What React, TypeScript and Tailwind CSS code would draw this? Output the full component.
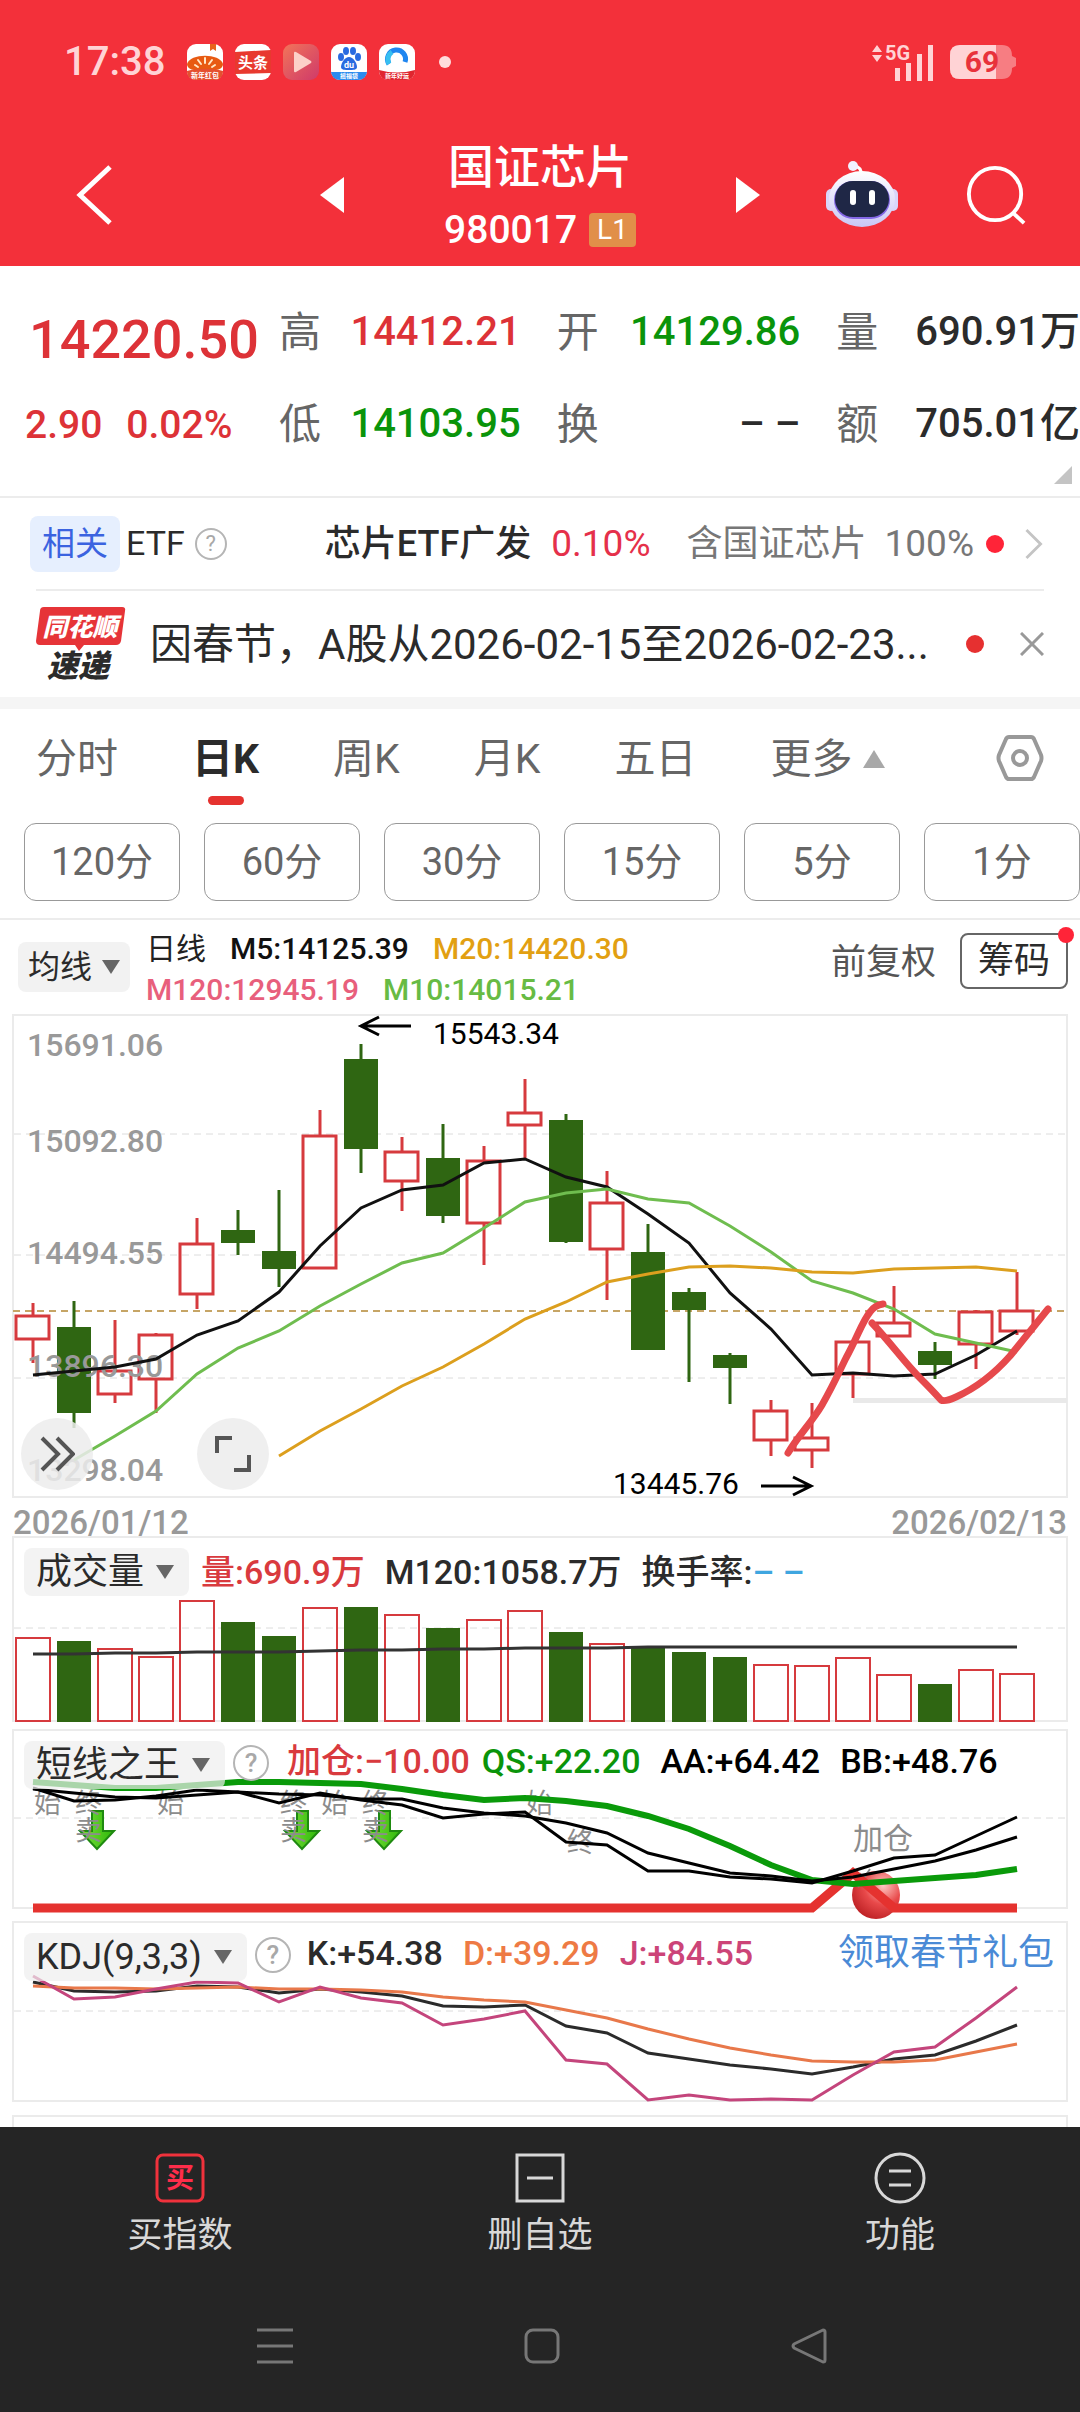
import { useState } from 'react';
import type { ReactNode } from 'react';
import clsx from 'clsx';

type Candle = [up: number, high: number, top: number, bottom: number, low: number];

const UP = '#d63a3e';
const DOWN = '#2f6612';

const CANDLES: Candle[] = [
  [1, 303, 315, 340, 363],
  [0, 301, 327, 413, 428],
  [1, 320, 370, 395, 403],
  [1, 333, 334, 380, 413],
  [1, 218, 243, 295, 309],
  [0, 210, 230, 243, 255],
  [0, 190, 251, 269, 287],
  [1, 110, 135, 269, 269],
  [0, 44, 59, 149, 173],
  [1, 137, 151, 182, 211],
  [0, 124, 158, 216, 223],
  [1, 146, 160, 224, 265],
  [1, 79, 112, 126, 158],
  [0, 114, 120, 242, 243],
  [1, 171, 202, 250, 300],
  [0, 224, 252, 350, 350],
  [0, 288, 292, 310, 382],
  [0, 353, 355, 368, 404],
  [1, 400, 410, 441, 456],
  [1, 403, 437, 451, 468],
  [1, 341, 341, 375, 398],
  [1, 286, 322, 337, 337],
  [0, 342, 351, 365, 379],
  [1, 310, 311, 345, 369],
  [1, 272, 310, 332, 335],
];

const MA5 = [375, 371, 367, 359, 335, 321, 292, 246, 208, 190, 185, 163, 159, 177, 187, 214, 243, 293, 329, 375, 373, 376, 374, 355, 331];
const MA10 = [460, 436, 411, 374, 348, 331, 306, 284, 263, 253, 228, 202, 193, 189, 199, 203, 226, 252, 281, 293, 309, 334, 343, 352];
const MA20 = [456, 431, 409, 386, 367, 344, 319, 302, 282, 274, 267, 266, 268, 272, 273, 269, 268, 267, 271];

const VOLUME = [85, 81, 74, 66, 122, 100, 86, 115, 115, 108, 94, 103, 112, 90, 79, 75, 70, 65, 58, 57, 65, 48, 38, 53, 49];
const VOLUME_MA = [118, 118, 117, 117, 116, 116, 116, 115, 114, 114, 113, 113, 112, 112, 112, 111, 111, 111, 111, 111, 111, 111, 111, 111, 111];

const QS = [53, 56, 59, 59, 56, 53, 53, 54, 55, 60, 66, 71, 69, 72, 77, 87, 100, 117, 136, 151, 155, 152, 149, 146, 140];
const AA = [59, 72, 71, 67, 61, 63, 74, 64, 71, 76, 89, 85, 83, 113, 116, 142, 142, 148, 150, 154, 142, 129, 126, 107, 88];
const BB = [60, 64, 68, 69, 66, 63, 65, 66, 70, 70, 79, 84, 87, 94, 104, 124, 134, 144, 147, 152, 148, 140, 132, 121, 108];
const ADD = Array.from({ length: 25 }, (_, i) => (i === 20 ? 144 : 179));

const K = [61, 70, 71, 70, 65, 66, 72, 68, 71, 75, 85, 86, 84, 105, 112, 132, 138, 144, 148, 153, 146, 138, 134, 120, 104];
const D = [65, 67, 67, 68, 67, 66, 68, 68, 69, 71, 76, 79, 81, 89, 97, 108, 118, 127, 134, 140, 141, 141, 139, 131, 123];
const J = [55, 78, 76, 68, 61, 62, 81, 66, 77, 82, 104, 98, 90, 139, 143, 179, 174, 179, 178, 179, 154, 131, 126, 97, 66];

const x = (i: number) => 33 + i * 41;

const toPoints = (values: number[], start = 0) =>
  values.map((y, i) => `${x(i + start)},${y}`).join(' ');

function Line({ values, start = 0, color, width = 3 }: { values: number[]; start?: number; color: string; width?: number }) {
  return <polyline points={toPoints(values, start)} fill="none" stroke={color} strokeWidth={width} />;
}

function Grid({ y }: { y: number }) {
  return <line x1="14" x2="1066" y1={y} y2={y} stroke="#dcdcdc" strokeWidth="1" strokeDasharray="7 5" />;
}

function Frame({ y = 0, height }: { y?: number; height: number }) {
  return <rect x="13" y={y + 1} width="1054" height={height - 2} fill="none" stroke="#ebebeb" strokeWidth="2" />;
}

// ---------- status bar ----------

function AppIcons() {
  return (
    <div className="flex items-center gap-3">
      <svg className="size-9" viewBox="0 0 36 36" aria-hidden="true">
        <rect width="36" height="36" rx="9" fill="#fff" />
        <path d="M23 0h6v7l-3-2-3 2z" fill="#e8641c" />
        <path d="M0 20C3 9 33 9 36 20c0 5-6 7-18 7S0 25 0 20z" fill="#e85a12" />
        <path d="M8 21l3 2M11 16l3 4M18 14v5M25 16l-3 4M28 21l-3 2" stroke="#ffe9c9" strokeWidth="2" strokeLinecap="round" />
        <path d="M0 27c10-3 26-3 36 0 0 6-4 9-9 9H9c-5 0-9-3-9-9z" fill="#e5502f" />
        <text x="18" y="34" fontSize="7" fontWeight="700" textAnchor="middle" fill="#fff">新年红包</text>
      </svg>
      <svg className="size-9" viewBox="0 0 36 36" aria-hidden="true">
        <rect width="36" height="36" rx="9" fill="#fff" />
        <path d="M0 8l36-2v23L0 30z" fill="#e8392f" />
        <text x="18" y="24" fontSize="15" fontWeight="700" textAnchor="middle" fill="#fff">头条</text>
      </svg>
      <svg className="size-9" viewBox="0 0 36 36" aria-hidden="true">
        <defs>
          <linearGradient id="play" x1="0" y1="0" x2="1" y2="1">
            <stop offset="0" stopColor="#f27459" />
            <stop offset="1" stopColor="#cf3a6a" />
          </linearGradient>
        </defs>
        <rect width="36" height="36" rx="9" fill="url(#play)" />
        <path d="M11 9v18q0 2 2 1l15-9q1-1 0-2L13 8q-2-1-2 1z" fill="#fcd0c8" />
      </svg>
      <svg className="size-9" viewBox="0 0 36 36" aria-hidden="true">
        <rect width="36" height="36" rx="9" fill="#fff" />
        <g fill="#2a6be0">
          <ellipse cx="10" cy="13" rx="3" ry="4" />
          <ellipse cx="15" cy="7" rx="3" ry="4" />
          <ellipse cx="22" cy="7" rx="3" ry="4" />
          <ellipse cx="27" cy="13" rx="3" ry="4" />
          <path d="M18 13c4 0 8 6 8 10 0 3-4 3-8 3s-8 0-8-3c0-4 4-10 8-10z" />
        </g>
        <text x="18" y="24" fontSize="9" fontWeight="700" textAnchor="middle" fill="#fff">du</text>
        <path d="M0 28h36c-1 5-4 8-9 8H9c-5 0-8-3-9-8z" fill="#2b8bee" />
        <text x="18" y="34" fontSize="6" fontWeight="700" textAnchor="middle" fill="#fff">摇福袋</text>
      </svg>
      <svg className="size-9" viewBox="0 0 36 36" aria-hidden="true">
        <rect width="36" height="36" rx="9" fill="#fff" />
        <path d="M10 20a9 9 0 1 1 16-2" fill="none" stroke="#1f86f0" strokeWidth="5" />
        <path d="M10 20a9 9 0 0 1 3-12" fill="none" stroke="#37bff0" strokeWidth="5" />
        <path d="M0 26q18 5 36 0c0 6-4 10-9 10H9c-5 0-9-4-9-10z" fill="#e0262f" />
        <text x="18" y="34" fontSize="6" fontWeight="700" textAnchor="middle" fill="#fff">新年好运</text>
      </svg>
    </div>
  );
}

function StatusBar() {
  return (
    <div className="flex h-[124px] items-center justify-between px-16 text-[#ffd3d5]">
      <div className="flex items-center">
        <span className="mr-[22px] text-[40px] font-medium">17:38</span>
        <AppIcons />
        <span className="ml-6 size-3 rounded-full bg-[#ffdcdc]" />
      </div>
      <div className="flex items-center gap-4">
        <svg className="h-11 w-[62px]" viewBox="0 0 62 44" fill="currentColor" role="img" aria-label="5G 信号">
          <path d="M0 12l5-7 5 7zM0 15h10l-5 7z" />
          <text x="13" y="20" fontSize="20" fontWeight="700">5G</text>
          <path d="M23 28h5v13h-5zM34 23h5v18h-5zM45 14h5v27h-5zM56 5h5v36h-5z" />
        </svg>
        <svg className="h-9 w-[66px]" viewBox="0 0 66 36" role="img" aria-label="电量 69%">
          <path d="M10 1h42q10 0 10 11l4 2v8l-4 2q0 11-10 11H10Q0 35 0 25V11Q0 1 10 1z" fill="#f77d82" />
          <path d="M10 1h36v34H10Q0 35 0 25V11Q0 1 10 1z" fill="#ffd3d5" />
          <text x="32" y="28" fontSize="30" fontWeight="700" textAnchor="middle" fill="#e8323b">69</text>
        </svg>
      </div>
    </div>
  );
}

// ---------- title bar ----------

function TitleBar() {
  return (
    <header className="grid h-[142px] grid-cols-[1fr_auto_1fr] items-center text-white">
      <button className="justify-self-start pl-19" aria-label="返回">
        <svg className="h-15 w-9" viewBox="0 0 36 60" fill="none" stroke="currentColor" strokeWidth="5">
          <path d="M34 2L4 30l30 28" />
        </svg>
      </button>
      <div className="flex items-center gap-[101px]">
        <button aria-label="上一只">
          <svg className="h-9 w-6" viewBox="0 0 24 36" fill="currentColor"><path d="M24 0v36L0 18z" /></svg>
        </button>
        <div className="flex w-[190px] flex-col items-center pt-1 whitespace-nowrap">
          <h1 className="text-[46px] leading-[62px] font-medium">国证芯片</h1>
          <div className="flex items-center gap-3 pt-1">
            <span className="text-[39px] leading-[56px] font-medium">980017</span>
            <span className="rounded bg-[#e18f49] px-2 text-[28px] leading-[34px]">L1</span>
          </div>
        </div>
        <button aria-label="下一只">
          <svg className="h-9 w-6" viewBox="0 0 24 36" fill="currentColor"><path d="M0 0v36l24-18z" /></svg>
        </button>
      </div>
      <div className="flex items-center gap-[68px] justify-self-end pr-[54px]">
        <button aria-label="智能助手">
          <svg className="h-[68px] w-[72px]" viewBox="0 0 72 68">
            <defs>
              <linearGradient id="bot" x1="0" y1="0" x2="0" y2="1">
                <stop offset="0" stopColor="#fff" />
                <stop offset="1" stopColor="#c9c6f5" />
              </linearGradient>
            </defs>
            <path d="M35 14q1-8-7-9" fill="none" stroke="#fff" strokeWidth="3" />
            <circle cx="27" cy="5" r="5" fill="#f2f1ff" />
            <rect x="0" y="28" width="10" height="22" rx="5" fill="#d9d6fa" />
            <rect x="62" y="28" width="10" height="22" rx="5" fill="#d9d6fa" />
            <ellipse cx="36" cy="38" rx="33" ry="28" fill="url(#bot)" />
            <rect x="8" y="20" width="56" height="38" rx="19" fill="#8468e6" />
            <rect x="9" y="20" width="54" height="36" rx="18" fill="#1f2746" />
            <rect x="24" y="29" width="6" height="15" rx="3" fill="#fff" />
            <rect x="43" y="29" width="6" height="15" rx="3" fill="#fff" />
          </svg>
        </button>
        <button aria-label="搜索">
          <svg className="size-15" viewBox="0 0 62 62" fill="none" stroke="currentColor" strokeWidth="4">
            <circle cx="30" cy="30" r="27" />
            <path d="M48 49l12 11" />
          </svg>
        </button>
      </div>
    </header>
  );
}

// ---------- quote ----------

function Quote({ label, value, tone = 'text-[#2b2b2b]' }: { label: string; value: string; tone?: string }) {
  return (
    <div className="flex items-center justify-between whitespace-nowrap">
      <dt className="text-[42px] text-[#666]">{label}</dt>
      <dd className={clsx('text-[40px] font-medium', tone)}>{value}</dd>
    </div>
  );
}

function QuotePanel() {
  return (
    <section className="flex h-[232px] border-b-2 border-[#ececec] pl-[25px]">
      <div className="w-[254px] shrink-0 whitespace-nowrap text-[#dd3237]">
        <p className="pt-[38px] pl-1 text-[54px] leading-[72px] font-medium">14220.50</p>
        <p className="flex gap-6 pt-[18px] text-[39px] leading-[62px] font-medium">
          <span>2.90</span>
          <span>0.02%</span>
        </p>
      </div>
      <dl className="grid flex-1 grid-cols-[240fr_242fr_242fr] grid-rows-[62px_62px] gap-x-9 gap-y-[30px] pt-[35px]">
        <Quote label="高" value="14412.21" tone="text-[#dd3237]" />
        <Quote label="开" value="14129.86" tone="text-[#0a940a]" />
        <Quote label="量" value="690.91万" />
        <Quote label="低" value="14103.95" tone="text-[#0a940a]" />
        <Quote label="换" value="– –" />
        <Quote label="额" value="705.01亿" />
      </dl>
      <svg className="-ml-[26px] mr-2 mb-3 size-[18px] self-end" viewBox="0 0 18 18" fill="#c4c4c4" aria-hidden="true">
        <path d="M18 0v18H0z" />
      </svg>
    </section>
  );
}

function Help({ className, label }: { className?: string; label: string }) {
  return (
    <button
      aria-label={label}
      className={clsx('flex shrink-0 items-center justify-center rounded-full border-2 border-[#b5b5b5] text-[#a8a8a8]', className)}
    >
      ?
    </button>
  );
}

function RelatedRow() {
  return (
    <section className="mx-[30px] flex h-[91px] items-center whitespace-nowrap">
      <span className="rounded-lg bg-[#e6effe] px-3 text-[33px] leading-[56px] text-[#3b63e0]">相关</span>
      <span className="ml-[6px] text-[34px] text-[#2b2b2b]">ETF</span>
      <Help label="相关ETF说明" className="ml-[10px] size-8 text-[22px]" />
      <a href="#etf" className="ml-auto flex items-center">
        <span className="text-[36px] font-medium text-[#2b2b2b]">芯片ETF广发</span>
        <span className="ml-5 text-[37px] text-[#e5304a]">0.10%</span>
        <span className="ml-9 text-[36px] text-[#777]">含国证芯片</span>
        <span className="ml-[18px] text-[37px] text-[#777]">100%</span>
        <span className="ml-3 size-[18px] rounded-full bg-[#ff2438]" />
        <svg className="ml-5 mr-[6px] h-8 w-5" viewBox="0 0 20 34" fill="none" stroke="#c4c4c4" strokeWidth="3" aria-hidden="true">
          <path d="M2 2l15 15L2 32" />
        </svg>
      </a>
    </section>
  );
}

function NewsRow() {
  return (
    <section className="mx-9 flex h-[108px] items-center border-t-2 border-[#ececec]">
      <svg className="h-[74px] w-[90px] shrink-0" viewBox="0 0 90 74" role="img" aria-label="同花顺速递">
        <path d="M8 0h78q4 0 3 4l-4 30q-1 4-5 4H48l-5 6-4-6H4q-4 0-4-4L4 4q0-4 4-4z" fill="#e63438" />
        <text x="44" y="29" fontSize="25" fontWeight="900" fontStyle="italic" textAnchor="middle" fill="#fff">同花顺</text>
        <text x="42" y="70" fontSize="31" fontWeight="900" fontStyle="italic" textAnchor="middle" fill="#2b2b2b">速递</text>
      </svg>
      <a href="#news" className="ml-6 flex-1 truncate text-[42px] text-[#2b2b2b]">
        因春节，A股从2026-02-15至2026-02-23...
      </a>
      <span className="mr-9 size-[18px] rounded-full bg-[#e63030]" />
      <button aria-label="关闭">
        <svg className="size-6" viewBox="0 0 24 24" fill="none" stroke="#999" strokeWidth="3"><path d="M1 1l22 22M23 1L1 23" /></svg>
      </button>
    </section>
  );
}

// ---------- period tabs ----------

const TABS = ['分时', '日K', '周K', '月K', '五日'];
const PERIODS = ['120分', '60分', '30分', '15分', '5分', '1分'];

function Tabs() {
  const [active, setActive] = useState('日K');
  return (
    <nav className="flex h-[114px] items-start gap-[74px] px-9 pt-5 text-[41px] leading-[60px] whitespace-nowrap text-[#666]">
      {TABS.map((tab) => (
        <button
          key={tab}
          onClick={() => setActive(tab)}
          className={clsx('flex flex-col items-center', active === tab && 'font-bold text-[#2b2b2b]')}
        >
          {tab}
          {active === tab && <span className="mt-[7px] h-[9px] w-9 rounded-full bg-[#e5322f]" />}
        </button>
      ))}
      <button className="flex items-center gap-[10px]">
        更多
        <svg className="h-[18px] w-[22px]" viewBox="0 0 22 18" fill="#a8a8a8" aria-hidden="true"><path d="M11 0l11 18H0z" /></svg>
      </button>
      <button className="mt-[6px] ml-auto" aria-label="图表设置">
        <svg className="h-[46px] w-12" viewBox="0 0 48 46" fill="none" stroke="#999" strokeWidth="4">
          <path d="M13 2h22q2 0 3 2l7 16q1 3 0 6l-7 16q-1 2-3 2H13q-2 0-3-2L3 26q-1-3 0-6l7-16q1-2 3-2z" />
          <circle cx="24" cy="23" r="7" />
        </svg>
      </button>
    </nav>
  );
}

function Periods() {
  return (
    <div className="grid grid-cols-6 gap-6 border-b-2 border-[#ececec] pb-[17px] pl-6">
      {PERIODS.map((p) => (
        <button key={p} className="h-[78px] rounded-xl border border-[#999] text-[38px] text-[#666]">
          {p}
        </button>
      ))}
    </div>
  );
}

// ---------- charts ----------

function Caret() {
  return <svg className="h-[14px] w-[18px]" viewBox="0 0 18 14" fill="#666" aria-hidden="true"><path d="M0 0h18L9 14z" /></svg>;
}

function Picker({ children }: { children: ReactNode }) {
  return (
    <button className="flex h-12 shrink-0 items-center gap-3 rounded-lg bg-[#eeeeee]/70 pr-[15px] pl-3 text-[36px] font-normal text-[#2b2b2b]">
      {children}
      <Caret />
    </button>
  );
}

function AverageBar() {
  return (
    <div className="flex h-[94px] items-center pr-3 pl-[18px] whitespace-nowrap">
      <button className="flex h-[50px] items-center gap-[10px] rounded-lg bg-[#f2f2f2] px-[10px] text-[32px] text-[#2b2b2b]">
        均线
        <Caret />
      </button>
      <div className="mt-1 ml-4 text-[30px] leading-[41px] font-medium">
        <p className="flex gap-6">
          <span className="font-normal text-[#222]">日线</span>
          <span className="text-[#111]">M5:14125.39</span>
          <span className="text-[#e2a012]">M20:14420.30</span>
        </p>
        <p className="flex gap-6">
          <span className="text-[#e85f7c]">M120:12945.19</span>
          <span className="text-[#67bb44]">M10:14015.21</span>
        </p>
      </div>
      <button className="mb-2 ml-auto text-[35px] text-[#555]">前复权</button>
      <button className="relative mb-3 ml-6 h-[56px] rounded-lg border-2 border-[#666] px-4 text-[36px] leading-[50px] text-[#2b2b2b]">
        筹码
        <span className="absolute -top-2 -right-2 size-4 rounded-full bg-[#ff2438]" />
      </button>
    </div>
  );
}

const AXIS: [number, string][] = [[56, '15691.06'], [152, '15092.80'], [264, '14494.55'], [377, '13896.30'], [481, '13298.04']];

function CandleChart() {
  return (
    <div className="relative">
      <svg className="block w-full" viewBox="0 14 1080 484" role="img" aria-label="日K线图">
        <Frame y={14} height={484} />
        <Grid y={134} />
        <Grid y={255} />
        <Grid y={378} />
        <rect x="853" y="398" width="214" height="5" fill="#e9e9e9" />
        <line x1="13" x2="1066" y1="311" y2="311" stroke="#c6a566" strokeWidth="2" strokeDasharray="7 5" />
        {CANDLES.map(([up, high, top, bottom, low], i) => (
          <g key={i} stroke={up ? UP : DOWN} strokeWidth="3">
            <path d={`M${x(i)} ${high}V${top}M${x(i)} ${bottom}V${low}`} />
            {up
              ? <rect x={x(i) - 17} y={top + 1} width="33" height={bottom - top - 2} fill="none" />
              : <rect x={x(i) - 17} y={top} width="34" height={bottom - top} fill={DOWN} stroke="none" />}
          </g>
        ))}
        <g fontSize="32" fontWeight="500" fill="#999">
          {AXIS.map(([y, text]) => <text key={text} x="27" y={y}>{text}</text>)}
        </g>
        <Line values={MA5} color="#111" />
        <Line values={MA10} start={1} color="#6fbd4f" />
        <Line values={MA20} start={6} color="#dc9f1e" />
        <g fontSize="30" fill="#000">
          <text x="433" y="44">15543.34</text>
          <text x="613" y="494">13445.76</text>
        </g>
        <g fill="none" stroke="#000" strokeWidth="3">
          <path d="M411 26H362M379 17l-18 9 18 9" />
          <path d="M761 486h49M793 477l18 9-18 9" />
        </g>
        <g fill="none" stroke="#e6494c" strokeWidth="7" strokeLinecap="round" strokeLinejoin="round">
          <path d="M788 453C798 436 812 422 822 405C834 384 840 370 846 358C858 336 862 322 870 312Q875 305 883 304" />
          <path d="M872 323C890 342 904 362 920 378Q932 390 941 400Q945 402 956 397C976 388 994 374 1010 356L1048 309" />
        </g>
      </svg>
      <button aria-label="展开" className="absolute bottom-2 left-[21px] flex size-[72px] items-center justify-center rounded-full bg-[#ececec]/85">
        <svg className="size-9" viewBox="0 0 36 36" fill="none" stroke="#555" strokeWidth="4"><path d="M3 2l16 16L3 34M18 2l16 16-16 16" /></svg>
      </button>
      <button aria-label="全屏" className="absolute bottom-2 left-[197px] flex size-[72px] items-center justify-center rounded-full bg-[#ececec]/85">
        <svg className="size-9" viewBox="0 0 36 36" fill="none" stroke="#555" strokeWidth="4"><path d="M2 17V2h15M34 19v15H19" /></svg>
      </button>
    </div>
  );
}

// The readings share one grid cell with the plot, so lines may run beneath them.
function Panel({ header, children, height, label }: { header: ReactNode; children: ReactNode; height: number; label: string }) {
  return (
    <section className="grid">
      <svg className="col-start-1 row-start-1 block w-full overflow-visible" viewBox={`0 0 1080 ${height}`} role="img" aria-label={label}>
        <Frame height={height} />
        {children}
      </svg>
      <div className="relative col-start-1 row-start-1 flex items-start self-start pt-3 pr-[26px] pl-6 text-[34px] leading-[40px] font-medium whitespace-nowrap">
        {header}
      </div>
    </section>
  );
}

function VolumePanel() {
  return (
    <Panel
      label="成交量"
      height={186}
      header={
        <>
          <Picker>成交量</Picker>
          <div className="ml-3 flex gap-5 pt-1">
            <span className="text-[#d93a3e]">量:690.9万</span>
            <span className="text-[#2b2b2b]">M120:1058.7万</span>
            <span className="text-[#2b2b2b]">换手率:<span className="text-[#3fa6e0]">– –</span></span>
          </div>
        </>
      }
    >
      <Grid y={92} />
      {VOLUME.map((h, i) =>
        CANDLES[i][0]
          ? <rect key={i} x={x(i) - 17} y={187 - h} width="34" height={h - 2} fill="none" stroke={UP} strokeWidth="2" />
          : <rect key={i} x={x(i) - 17} y={186 - h} width="34" height={h} fill={DOWN} />
      )}
      <Line values={VOLUME_MA} color="#333" />
    </Panel>
  );
}

const MARKS: [number, number, string][] = [
  [0, 84, '始'], [1, 84, '终'], [1, 111, '卖'], [3, 84, '始'], [6, 84, '终'], [6, 111, '卖'],
  [7, 84, '始'], [8, 84, '终'], [8, 111, '卖'], [12, 84, '始'], [13, 123, '终'],
];

function SignalPanel() {
  return (
    <Panel
      label="短线之王"
      height={180}
      header={
        <>
          <Picker>短线之王</Picker>
          <Help label="短线之王说明" className="mt-1 ml-2 size-9 text-[26px]" />
          <div className="ml-[18px] flex gap-5">
            <span className="text-[#d93a3e]">加仓:−10.00</span>
            <span className="-ml-2 text-[#0a940a]">QS:+22.20</span>
            <span className="text-black">AA:+64.42</span>
            <span className="text-black">BB:+48.76</span>
          </div>
        </>
      }
    >
      <Grid y={89} />
      <defs>
        <radialGradient id="ball" cx="0.65" cy="0.3" r="0.8">
          <stop offset="0" stopColor="#ffc9c4" />
          <stop offset="0.5" stopColor="#e8494a" />
          <stop offset="1" stopColor="#b81c20" />
        </radialGradient>
        <linearGradient id="arrow" x1="0" y1="0" x2="1" y2="0">
          <stop offset="0" stopColor="#7be03a" />
          <stop offset="1" stopColor="#2fb80a" />
        </linearGradient>
      </defs>
      {[1, 6, 8].map((i) => (
        <path
          key={i}
          d={`M${x(i) + 18} 82h11v20h11l-17 18-17-18h12z`}
          fill="url(#arrow)"
          stroke="#1f8a10"
          strokeWidth="2"
        />
      ))}
      <circle cx="876" cy="166" r="24" fill="url(#ball)" />
      <g fontSize="27" fill="#8c8c8c">
        {MARKS.map(([i, y, text]) => <text key={`${i}-${y}`} x={x(i) + 1} y={y}>{text}</text>)}
        <text x="853" y="120" fontSize="30">加仓</text>
        <path d="M858 158l12-18M860 144q4 10 12 14" fill="none" stroke="#8c8c8c" strokeWidth="2" />
      </g>
      <Line values={ADD} color="#e5322f" width={9} />
      <Line values={QS} color="#0a9a0a" width={6} />
      <Line values={BB} color="#000" />
      <Line values={AA} color="#000" />
    </Panel>
  );
}

function KdjPanel() {
  return (
    <Panel
      label="KDJ"
      height={181}
      header={
        <>
          <Picker>KDJ(9,3,3)</Picker>
          <Help label="KDJ说明" className="mt-1 ml-2 size-9 text-[26px]" />
          <div className="ml-4 flex gap-5">
            <span className="text-[#2b2b2b]">K:+54.38</span>
            <span className="text-[#ee7a44]">D:+39.29</span>
            <span className="text-[#cc4478]">J:+84.55</span>
          </div>
          <a href="#gift" className="ml-auto text-[36px] font-normal text-[#4a8ad6]">领取春节礼包</a>
        </>
      }
    >
      <Grid y={90} />
      <Line values={K} color="#2b2b2b" />
      <Line values={D} color="#e8784a" />
      <Line values={J} color="#c4457c" />
    </Panel>
  );
}

// ---------- bottom ----------

function BottomNav() {
  return (
    <footer className="bg-[#252525] text-[#d8d8d8]">
      <nav className="grid grid-cols-3 pt-[25px] text-[35px] leading-[52px]">
        <button className="flex flex-col items-center gap-[6px]">
          <svg className="size-[52px]" viewBox="0 0 52 52" fill="none" aria-hidden="true">
            <rect x="3" y="3" width="46" height="46" rx="6" stroke="#f0323c" strokeWidth="3" />
            <text x="26" y="36" fontSize="28" fontWeight="700" textAnchor="middle" fill="#ff2d4a">买</text>
          </svg>
          买指数
        </button>
        <button className="flex flex-col items-center gap-[6px]">
          <svg className="size-[52px]" viewBox="0 0 52 52" fill="none" stroke="currentColor" strokeWidth="3" aria-hidden="true">
            <path d="M3 3h46v46H3zM13 26h26" />
          </svg>
          删自选
        </button>
        <button className="flex flex-col items-center gap-[6px]">
          <svg className="size-[52px]" viewBox="0 0 52 52" fill="none" stroke="currentColor" strokeWidth="3" aria-hidden="true">
            <circle cx="26" cy="26" r="24" />
            <path d="M15 19h22M15 33h22" />
          </svg>
          功能
        </button>
      </nav>
      <div className="flex items-center justify-center gap-[231px] pt-[66px] pb-[48px] pl-1 text-[#777]">
        <button aria-label="最近任务">
          <svg className="block size-9" viewBox="0 0 36 36" stroke="currentColor" strokeWidth="3"><path d="M0 2h36M0 18h36M0 34h36" /></svg>
        </button>
        <button aria-label="主屏幕">
          <svg className="block size-9" viewBox="0 0 36 36" fill="none" stroke="currentColor" strokeWidth="3"><rect x="2" y="2" width="32" height="32" rx="7" /></svg>
        </button>
        <button aria-label="返回上一级">
          <svg className="block size-9" viewBox="0 0 36 36" fill="none" stroke="currentColor" strokeWidth="3" strokeLinejoin="round">
            <path d="M32 2L3 16q-2 2 0 4l29 14q2 0 2-2V4q0-2-2-2z" />
          </svg>
        </button>
      </div>
    </footer>
  );
}

export default function App() {
  return (
    <div className="w-full overflow-x-hidden bg-white font-[Roboto,'Noto_Sans_CJK_SC',sans-serif]">
      <div className="bg-[#f3303a]">
        <StatusBar />
        <TitleBar />
      </div>
      <main>
        <QuotePanel />
        <RelatedRow />
        <NewsRow />
        <div className="h-3 bg-[#f5f5f5]" />
        <Tabs />
        <Periods />
        <AverageBar />
        <CandleChart />
        <div className="flex h-[38px] items-center justify-between px-[13px] pt-3 text-[33px] font-medium text-[#999]">
          <time>2026/01/12</time>
          <time>2026/02/13</time>
        </div>
        <VolumePanel />
        <div className="pt-[7px]"><SignalPanel /></div>
        <div className="pt-3"><KdjPanel /></div>
        <div className="mx-3 mt-[13px] h-3 border-2 border-b-0 border-[#ebebeb]" />
      </main>
      <BottomNav />
    </div>
  );
}
